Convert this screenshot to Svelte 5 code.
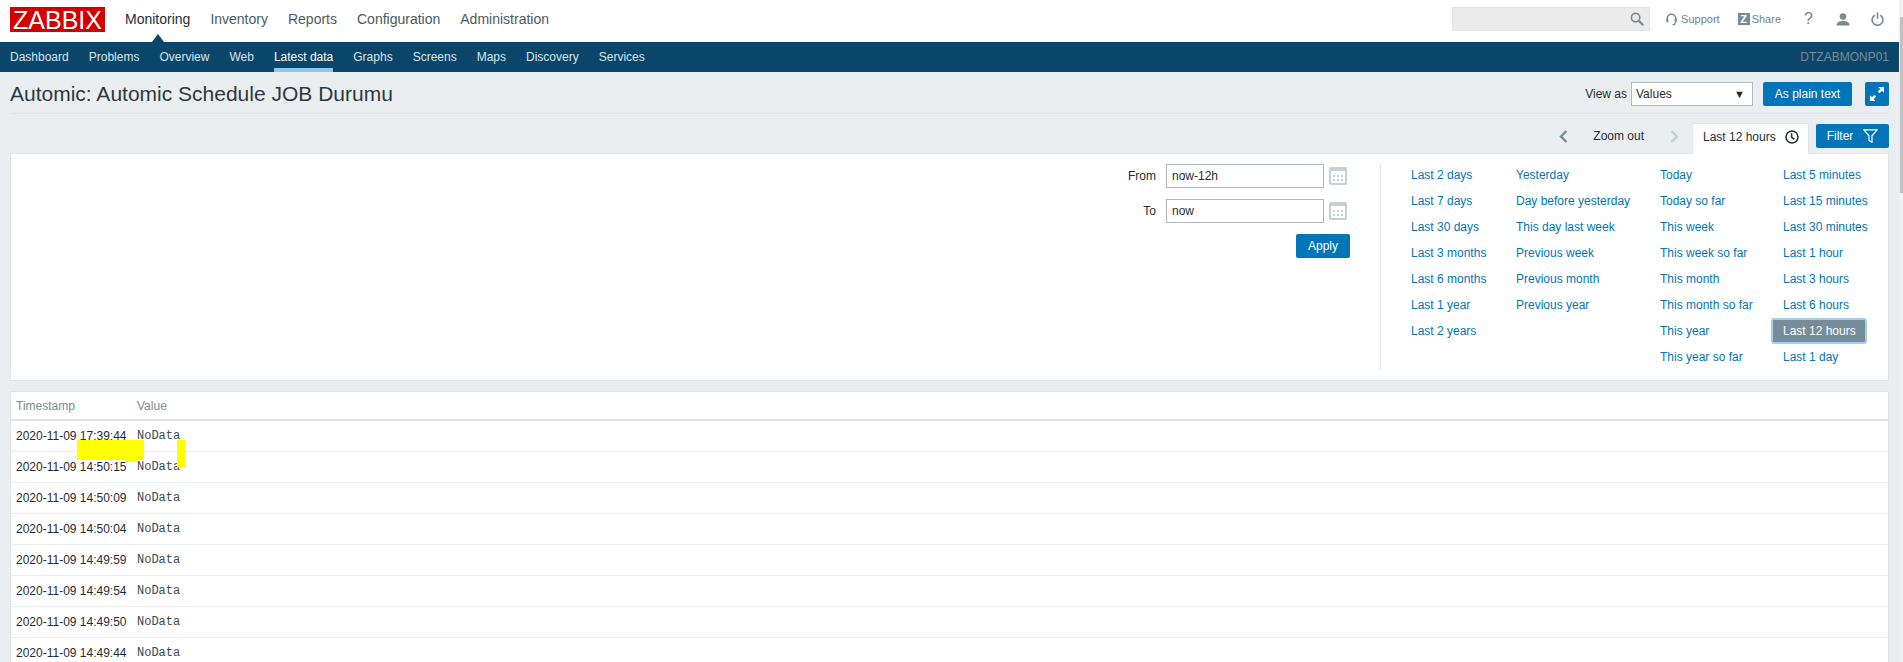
<script>
  const mainNav = ['Monitoring', 'Inventory', 'Reports', 'Configuration', 'Administration'];
  const subNav = ['Dashboard', 'Problems', 'Overview', 'Web', 'Latest data', 'Graphs', 'Screens', 'Maps', 'Discovery', 'Services'];
  const columns = [
    { width: 105, links: ['Last 2 days', 'Last 7 days', 'Last 30 days', 'Last 3 months', 'Last 6 months', 'Last 1 year', 'Last 2 years'] },
    { width: 144, links: ['Yesterday', 'Day before yesterday', 'This day last week', 'Previous week', 'Previous month', 'Previous year'] },
    { width: 123, links: ['Today', 'Today so far', 'This week', 'This week so far', 'This month', 'This month so far', 'This year', 'This year so far'] },
    { width: 100, links: ['Last 5 minutes', 'Last 15 minutes', 'Last 30 minutes', 'Last 1 hour', 'Last 3 hours', 'Last 6 hours', 'Last 12 hours', 'Last 1 day'] }
  ];
  const rows = ['17:39:44', '14:50:15', '14:50:09', '14:50:04', '14:49:59', '14:49:54', '14:49:50', '14:49:44'];
</script>

<div class="root">
  <div class="main">
    <header class="top">
      <div class="logo">ZABBIX</div>
      <nav class="mainnav">
        {#each mainNav as item, i}
          <span class="mainitem" class:current={i === 0}>{item}</span>
        {/each}
      </nav>
      <div class="tools">
        <div class="search">
          <svg width="14" height="14" viewBox="0 0 14 14" fill="none" stroke="#768d99" stroke-width="1.7"><circle cx="5.6" cy="5.6" r="4.2"/><path d="M8.8 8.8l4.4 4.4" stroke-width="2.2"/></svg>
        </div>
        <span class="tool support">
          <svg width="11" height="13" viewBox="0 0 11 13" fill="none" stroke="#768d99" stroke-width="1.6"><path d="M1.2 8V5.5a4.3 4.3 0 0 1 8.6 0V8"/><rect x=".4" y="5.6" width="2" height="4" rx=".8" fill="#768d99" stroke="none"/><rect x="8.6" y="5.6" width="2" height="4" rx=".8" fill="#768d99" stroke="none"/><path d="M9.3 9.5c0 1.6-1.2 2.4-2.8 2.4" stroke-width="1.2"/></svg>
          Support
        </span>
        <span class="tool share"><b class="zicon">Z</b>Share</span>
        <span class="help">?</span>
        <svg class="user" width="14" height="13" viewBox="0 0 14 13" fill="#768d99"><circle cx="7" cy="3.6" r="3.3"/><path d="M0.5 12.6c0-3.4 2.8-4.6 6.5-4.6s6.5 1.2 6.5 4.6z"/></svg>
        <svg class="power" width="13" height="14" viewBox="0 0 13 14" fill="none" stroke="#768d99" stroke-width="1.6"><path d="M3.8 3.2a5.4 5.4 0 1 0 5.4 0"/><path d="M6.5 .5v6.3"/></svg>
      </div>
    </header>

    <nav class="subnav">
      {#each subNav as item}
        <span class="subitem" class:selected={item === 'Latest data'}>{item}</span>
      {/each}
      <span class="server">DTZABMONP01</span>
    </nav>

    <div class="titlerow">
      <h1>Automic: Automic Schedule JOB Durumu</h1>
      <div class="controls">
        <label class="viewlabel" for="viewas">View as</label>
        <div class="select" id="viewas">Values<span class="arrow">▼</span></div>
        <button class="btn plain">As plain text</button>
        <button class="btn full" aria-label="Fullscreen">
          <svg width="14" height="14" viewBox="0 0 14 14" fill="#fff"><path d="M8.3 0H14v5.7l-2-2-2.6 2.6-1.7-1.7L10.300 2z"/><path d="M5.700 14H0V8.300l2 2 2.600-2.600 1.700 1.700L3.700 12z"/></svg>
        </button>
      </div>
    </div>

    <div class="timerow">
      <svg class="chev" width="9" height="13" viewBox="0 0 9 13" fill="none" stroke="#768d99" stroke-width="2.4"><path d="M7.500 1L2 6.500 7.500 12"/></svg>
      <span class="zoomout">Zoom out</span>
      <svg class="chev next" width="9" height="13" viewBox="0 0 9 13" fill="none" stroke="#c5d0d6" stroke-width="2.4"><path d="M1.500 1L7 6.500 1.500 12"/></svg>
      <div class="tab">
        Last 12 hours
        <svg width="14" height="14" viewBox="0 0 14 14" fill="none" stroke="#1f2c33" stroke-width="1.500"><circle cx="7" cy="7" r="6"/><path d="M6.600 3.200v4l2.800 2.200"/></svg>
      </div>
      <button class="btn filter">
        Filter
        <svg width="15" height="14" viewBox="0 0 15 14" fill="none" stroke="#fff" stroke-width="1.200"><path d="M.8.8h13.400L9 6.800v6.400l-3-1.600V6.800z"/></svg>
      </button>
    </div>

    <section class="panel">
      <div class="formwrap">
        <div class="form">
          <span class="flabel">From</span>
          <input class="finput" value="now-12h" />
          <span class="cal"><i></i></span>
          <span class="flabel">To</span>
          <input class="finput" value="now" />
          <span class="cal"><i></i></span>
          <button class="btn apply">Apply</button>
        </div>
      </div>
      <div class="ranges">
        {#each columns as col}
          <div class="rangecol" style="width: {col.width}px">
            {#each col.links as link}
              <div class="rangerow">
                <span class="range" class:active={link === 'Last 12 hours'}>{link}</span>
              </div>
            {/each}
          </div>
        {/each}
      </div>
    </section>

    <section class="tablewrap">
      <table>
        <thead>
          <tr><th class="c1">Timestamp</th><th>Value</th></tr>
        </thead>
        <tbody>
          {#each rows as t}
            <tr><td class="c1">2020-11-09 {t}</td><td class="mono">NoData</td></tr>
          {/each}
        </tbody>
      </table>
      <span class="mark m1"></span>
      <span class="mark m2"></span>
      <span class="mark m3"></span>
    </section>
  </div>
  <div class="scrollbar"><div class="thumb"></div></div>
</div>

<style>
  :global(body) {
    margin: 0;
    background: #ebeef0;
  }
  .root {
    display: flex;
    height: 662px;
    overflow: hidden;
    font-family: "Liberation Sans", Arial, sans-serif;
    font-size: 12px;
    color: #1f2c33;
  }
  .main {
    flex: 1;
    min-width: 0;
    background: #ebeef0;
  }
  .scrollbar {
    width: 4px;
    background: #f1f1f1;
    padding-top: 17px;
  }
  .thumb {
    width: 3px;
    margin-left: 1px;
    height: 176px;
    background: #c1c1c1;
  }
  .top {
    display: flex;
    align-items: flex-start;
    height: 42px;
    background: #fff;
    position: relative;
  }
  .logo {
    width: 95px;
    height: 25px;
    margin: 7px 0 0 10px;
    background: #d40000;
    color: #fff;
    font-size: 25px;
    line-height: 26px;
    text-align: center;
  }
  .mainnav {
    display: flex;
    margin-left: 10px;
    font-size: 14px;
    line-height: 16px;
    padding-top: 11px;
    color: #4a5a63;
  }
  .mainitem {
    padding: 0 10px 0;
    position: relative;
  }
  .mainitem.current {
    color: #1f2c33;
  }
  .mainitem.current::after {
    content: "";
    position: absolute;
    left: 50%;
    margin-left: -6px;
    top: 23px;
    border: 6px solid transparent;
    border-top: 0;
    border-bottom: 8px solid #0a466a;
  }
  .tools {
    margin-left: auto;
    display: flex;
    align-items: center;
    height: 38px;
    color: #6d838f;
    font-size: 11px;
  }
  .search {
    width: 198px;
    height: 24px;
    box-sizing: border-box;
    background: #ebebeb;
    border: 1px solid #e3e3e3;
    display: flex;
    align-items: center;
    justify-content: flex-end;
    padding-right: 5px;
  }
  .tool {
    display: flex;
    align-items: center;
  }
  .support {
    margin-left: 16px;
    gap: 4px;
  }
  .share {
    margin-left: 18px;
    gap: 2px;
  }
  .zicon {
    width: 12px;
    height: 12px;
    background: #768d99;
    color: #fff;
    font-size: 11px;
    line-height: 12px;
    text-align: center;
  }
  .help {
    margin-left: 23px;
    font-size: 16px;
    width: 9px;
  }
  .user {
    margin-left: 23px;
  }
  .power {
    margin-left: 21px;
    margin-right: 15px;
  }
  .subnav {
    display: flex;
    height: 30px;
    background: #0a466a;
    padding: 0 10px;
    gap: 20px;
    color: #d5e5ef;
    line-height: 30px;
  }
  .subitem {
    height: 30px;
    box-sizing: border-box;
  }
  .subitem.selected {
    color: #fff;
    border-bottom: 4px solid #8fc8ef;
  }
  .server {
    margin-left: auto;
    color: #768d99;
  }
  .titlerow {
    display: flex;
    justify-content: space-between;
    margin: 0 10px;
    padding: 10px 0 7px;
    border-bottom: 1px solid #dfe4e7;
  }
  h1 {
    margin: 0;
    font-size: 21px;
    font-weight: normal;
    line-height: 24px;
    color: #2b3840;
  }
  .controls {
    display: flex;
    align-items: center;
  }
  .viewlabel {
    margin-right: 4px;
  }
  .select {
    width: 122px;
    height: 24px;
    box-sizing: border-box;
    background: #fff;
    border: 1px solid #acbbc2;
    padding: 0 4px;
    line-height: 22px;
    display: flex;
    justify-content: space-between;
  }
  .arrow {
    font-size: 11px;
    margin-right: 3px;
  }
  .btn {
    height: 24px;
    border: 0;
    border-radius: 2px;
    background: #0275b8;
    color: #fff;
    font: inherit;
    padding: 0;
    display: flex;
    align-items: center;
    justify-content: center;
  }
  .plain {
    width: 89px;
    margin-left: 10px;
  }
  .full {
    width: 24px;
    margin-left: 13px;
  }
  .timerow {
    display: flex;
    justify-content: flex-end;
    align-items: flex-start;
    margin: 0 10px;
    padding-top: 9px;
    height: 30px;
    position: relative;
  }
  .chev {
    margin-top: 7px;
  }
  .zoomout {
    margin: 0 26px 0 25px;
    line-height: 26px;
  }
  .next {
    margin-right: 13px;
  }
  .tab {
    width: 117px;
    height: 31px;
    box-sizing: border-box;
    background: #fff;
    border: 1px solid #dfe4e7;
    border-bottom: 0;
    padding: 0 9px 5px 10px;
    display: flex;
    align-items: center;
    justify-content: space-between;
    position: relative;
    z-index: 1;
  }
  .filter {
    width: 73px;
    margin: 1px 0 0 7px;
    gap: 10px;
  }
  .panel {
    display: flex;
    margin: 0 10px;
    height: 228px;
    box-sizing: border-box;
    background: #fff;
    border: 1px solid #dfe4e7;
    padding: 10px 0 10px;
    position: relative;
  }
  .formwrap {
    width: 1336px;
    margin-right: 33px;
    display: flex;
    justify-content: flex-end;
  }
  .form {
    display: grid;
    grid-template-columns: auto 158px 18px;
    column-gap: 5px;
    row-gap: 11px;
    align-content: start;
    align-items: center;
  }
  .flabel {
    text-align: right;
    margin-right: 5px;
  }
  .finput {
    width: 158px;
    height: 24px;
    box-sizing: border-box;
    border: 1px solid #acbbc2;
    padding: 0 5px;
    font: inherit;
    color: #1f2c33;
    background: #fff;
    outline: none;
  }
  .cal {
    width: 18px;
    height: 18px;
    box-sizing: border-box;
    border: 2px solid #c5d0d6;
    border-top-width: 4px;
    border-radius: 2px;
    display: flex;
    align-items: center;
    justify-content: center;
  }
  .cal i {
    width: 2px;
    height: 2px;
    background: #c5d0d6;
    box-shadow: 4px 0 #c5d0d6, -4px 0 #c5d0d6, 0 4px #c5d0d6, 4px 4px #c5d0d6, -4px 4px #c5d0d6;
    margin-top: -3px;
  }
  .apply {
    grid-column: 2 / 4;
    justify-self: end;
    width: 54px;
    margin-right: -3px;
  }
  .ranges {
    display: flex;
    border-left: 1px solid #dfe4e7;
    padding-left: 30px;
    height: 206px;
    margin-top: 0;
  }
  .rangecol {
    margin-top: -2px;
  }
  .rangerow {
    height: 26px;
    line-height: 26px;
    white-space: nowrap;
  }
  .range {
    color: #0275b8;
    display: inline-block;
    height: 26px;
  }
  .range.active {
    box-sizing: border-box;
    margin-left: -12px;
    padding: 0 10px;
    width: 96px;
    line-height: 22px;
    background: #768d99;
    color: #fff;
    border: 2px solid #a3cfef;
    border-radius: 3px;
  }
  .tablewrap {
    margin: 10px 10px 0;
    background: #fff;
    border: 1px solid #dfe4e7;
    border-bottom: 0;
    position: relative;
  }
  table {
    width: 100%;
    border-collapse: collapse;
  }
  th {
    text-align: left;
    font-weight: normal;
    color: #768d99;
    height: 27px;
    padding: 0;
    border-bottom: 2px solid #dfe4e7;
  }
  td {
    height: 30px;
    padding: 0;
    border-bottom: 1px solid #ebeef0;
  }
  .c1 {
    width: 121px;
    padding-left: 5px;
  }
  .mono {
    font-family: "Liberation Mono", "Courier New", monospace;
    color: #3d4a52;
  }
  .mark {
    position: absolute;
    background: #ffff00;
    z-index: 1;
  }
  .m1 { left: 66px; top: 48px; width: 67px; height: 20px; }
  .m2 { left: 115px; top: 61px; width: 11px; height: 9px; }
  .m3 { left: 166px; top: 48px; width: 8px; height: 27px; }
</style>
